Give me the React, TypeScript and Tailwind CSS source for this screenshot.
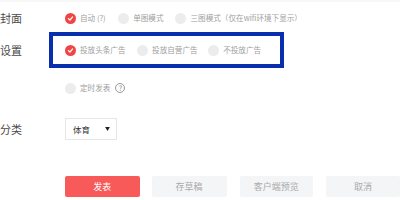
import React from "react";

const font = { fontFamily: '"Noto Sans CJK SC", "Noto Sans", sans-serif' };

function Radio({ checked = false }: { checked?: boolean }) {
  if (checked) {
    return (
      <span className="flex h-[11px] w-[11px] shrink-0 items-center justify-center rounded-full bg-[#f04545]">
        <svg width="7" height="7" viewBox="0 0 10 10" fill="none">
          <path d="M2 5.2 4.2 7.3 8 2.8" stroke="#fff" strokeWidth="1.8" strokeLinecap="round" strokeLinejoin="round" />
        </svg>
      </span>
    );
  }
  return <span className="h-[11px] w-[11px] shrink-0 rounded-full bg-[#ececec]" />;
}

function Option({ label, checked, className }: { label: React.ReactNode; checked?: boolean; className?: string }) {
  return (
    <div className={"flex items-center gap-[4.5px] " + (className ?? "")}>
      <Radio checked={checked} />
      <span className="whitespace-nowrap text-[7.6px] leading-none text-[#a0a0a0]">{label}</span>
    </div>
  );
}

export default function App() {
  return (
    <div className="relative h-[200px] w-[400px] overflow-hidden bg-white" style={font}>
      <div className="h-[2px] w-full bg-[#f7f7f7]" />
      <div className="flex flex-col">
        <div className="mt-[6px] flex h-5 items-center">
          <span className="w-[64.5px] text-[11px] text-[#4a4a4a]">封面</span>
          <Option checked label="自动 (?)" />
          <Option label="单图模式" className="ml-[12px]" />
          <Option label="三图模式（仅在wifi环境下显示）" className="ml-[11.5px]" />
        </div>

        <div className="mt-[4px] flex items-center">
          <span className="w-[49px] text-[11px] text-[#4a4a4a]">设置</span>
          <div className="flex h-[36px] w-[235px] items-center border-[4.5px] border-[#0a2fae] pl-[11.5px]">
            <Option checked label="投放头条广告" />
            <Option label="投放自营广告" className="ml-[11px]" />
            <Option label="不投放广告" className="ml-[10px]" />
          </div>
        </div>

        <div className="mt-[10px] flex h-5 items-center pl-[64.5px]">
          <Option label="定时发表" />
          <span className="ml-[5px] flex h-[10px] w-[10px] items-center justify-center rounded-full border border-[#999] text-[7px] leading-none text-[#888]">
            ?
          </span>
        </div>

        <div className="mt-[20px] flex h-[22px] items-center">
          <span className="w-[65px] text-[11px] text-[#4a4a4a]">分类</span>
          <div className="flex h-[22px] w-[52px] items-center justify-between border border-[#e6e6e6] pl-[7px] pr-[6px]">
            <span className="text-[8.5px] text-[#333]">体育</span>
            <svg width="5" height="4" viewBox="0 0 6 5">
              <path d="M0 0h6L3 5z" fill="#222" />
            </svg>
          </div>
        </div>

        <div className="mt-[36px] flex h-[21px] items-center pl-[65px]">
          <button className="flex h-[21px] w-[75px] items-center justify-center rounded-[2px] bg-[#f85959] text-[9px] text-white">
            发表
          </button>
          <button className="ml-[12px] flex h-[21px] w-[75px] items-center justify-center rounded-[2px] bg-[#f4f5f6] text-[9px] text-[#aaa]">
            存草稿
          </button>
          <button className="ml-[13px] flex h-[21px] w-[74px] items-center justify-center rounded-[2px] bg-[#f4f5f6] text-[9px] text-[#aaa]">
            客户端预览
          </button>
          <button className="ml-[13px] flex h-[21px] w-[74px] items-center justify-center rounded-[2px] bg-[#f4f5f6] text-[9px] text-[#aaa]">
            取消
          </button>
        </div>
      </div>
    </div>
  );
}
